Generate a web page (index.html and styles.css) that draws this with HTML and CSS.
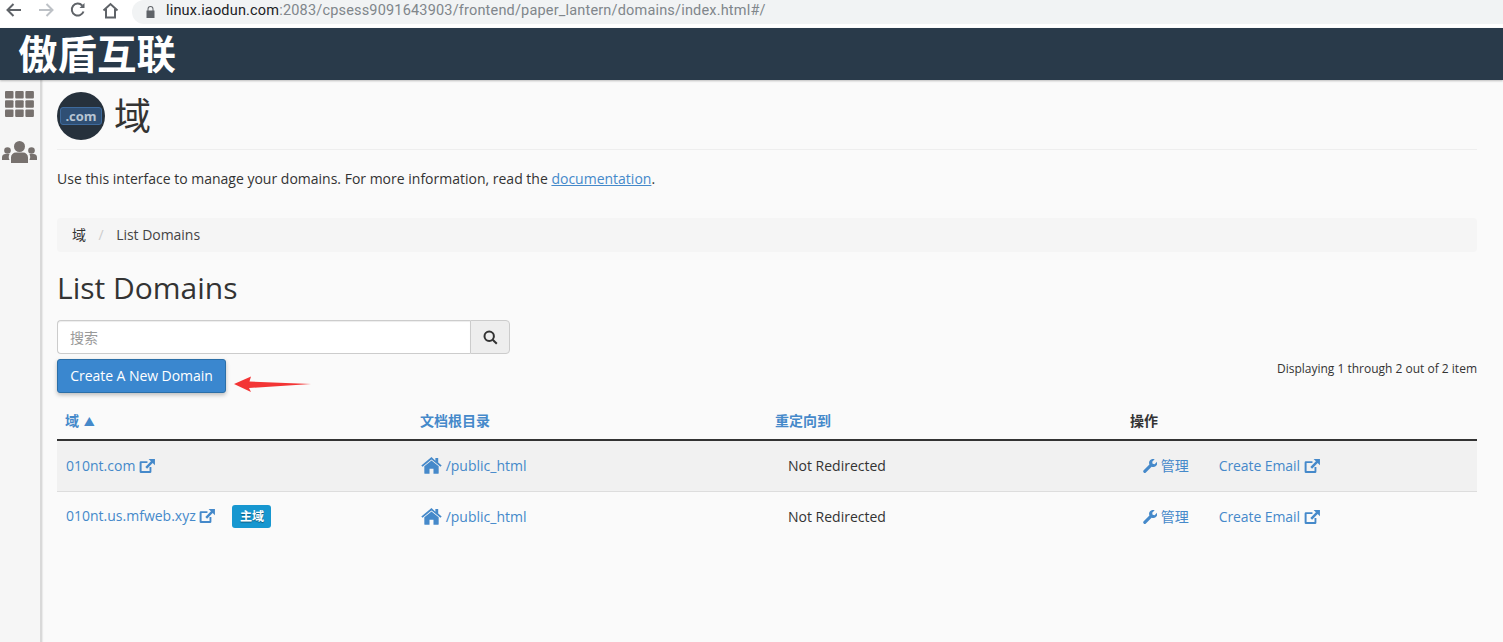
FILE: index.html
```html
<!DOCTYPE html>
<html lang="zh">
<head>
<meta charset="utf-8">
<title>域 - List Domains</title>
<link rel="stylesheet" href="styles.css">
</head>
<body>
<svg class="defs" width="0" height="0" aria-hidden="true">
  <symbol id="ext" viewBox="0 0 17 15">
    <path d="M1.600 2.400h7.400v2H2.700v8.500h8.500V8.600h2v5a1.400 1.400 0 0 1-1.400 1.400H2a1.400 1.400 0 0 1-1.400-1.400V3.800a1.400 1.400 0 0 1 1-1.400z"/>
    <path d="M10.200 0H17v6.800l-2.400-2.400-6 6-1.900-1.900 6-6z"/>
  </symbol>
  <symbol id="home" viewBox="0 0 22 18">
    <path d="M11 3.600 3.400 9.900v7a.9.9 0 0 0 .9.9h4.600v-5.400h4.200v5.400h4.600a.9.900 0 0 0 .9-.9v-7z"/>
    <path d="M11 0 .2 8.900l1.300 1.500L11 2.600l9.500 7.800 1.300-1.500-3.700-3V1h-3v2.900z"/>
  </symbol>
  <symbol id="wrench" viewBox="0 0 14 14">
    <path d="M.7 11.200 6.400 5.500A4 4 0 0 1 11.700.3L9.200 2.800l.4 2 2 .4L14 2.700a4 4 0 0 1-5.400 5L2.900 13.400a1.500 1.500 0 0 1-2.200-2.200z"/>
  </symbol>
</svg>

<header class="browser">
  <nav class="browser-nav">
    <svg class="nav-icon" width="16" height="14" viewBox="0 0 16 14"><path d="M15 7H2M7.500 1 1.500 7l6 6" class="stroke-dark"/></svg>
    <svg class="nav-icon" width="16" height="14" viewBox="0 0 16 14"><path d="M1 7h13M8.500 1l6 6-6 6" class="stroke-light"/></svg>
    <svg class="nav-icon" width="16" height="16" viewBox="0 0 16 16"><path d="M13.500 9.500A6 6 0 1 1 12.200 3.500" class="stroke-dark"/><path d="M14.500 1v5h-5z" class="fill-dark"/></svg>
    <svg class="nav-icon" width="17" height="17" viewBox="0 0 17 17"><path d="M1.500 8.500 8.500 2l7 6.500M4 7v8.500h9V7" class="stroke-dark"/></svg>
  </nav>
  <div class="address">
    <svg class="lock" width="9" height="12" viewBox="0 0 9 12"><path d="M1.500 4.500V3a3 3 0 0 1 6 0v1.500h1V12H.5V4.500zm1 0h4V3a2 2 0 0 0-4 0z"/></svg>
    <span class="url">linux.iaodun.com<span class="url-rest">:2083/cpsess9091643903/frontend/paper_lantern/domains/index.html#/</span></span>
  </div>
</header>

<div class="topbar"><span class="brand">傲盾互联</span></div>

<div class="layout">
  <aside class="sidebar">
    <svg class="side-grid" width="29" height="26" viewBox="0 0 29 26">
      <rect x="0" y="0" width="8.500" height="7.500" rx="1"/><rect x="10.200" y="0" width="8.500" height="7.500" rx="1"/><rect x="20.400" y="0" width="8.500" height="7.500" rx="1"/>
      <rect x="0" y="9.200" width="8.500" height="7.500" rx="1"/><rect x="10.200" y="9.200" width="8.500" height="7.500" rx="1"/><rect x="20.400" y="9.200" width="8.500" height="7.500" rx="1"/>
      <rect x="0" y="18.400" width="8.500" height="7.500" rx="1"/><rect x="10.200" y="18.400" width="8.500" height="7.500" rx="1"/><rect x="20.400" y="18.400" width="8.500" height="7.500" rx="1"/>
    </svg>
    <svg class="side-users" width="35" height="22" viewBox="0 0 35 22">
      <circle cx="17.500" cy="5.500" r="5.500"/><path d="M9 22v-5.500a5 5 0 0 1 5-5h7a5 5 0 0 1 5 5V22z"/>
      <circle cx="5.500" cy="9.500" r="3.300"/><path d="M0 19v-2.500a3.500 3.500 0 0 1 3.500-3.500h4A6.500 6.500 0 0 0 7.500 19z"/>
      <circle cx="29.500" cy="9.500" r="3.300"/><path d="M35 19v-2.500a3.500 3.500 0 0 0-3.500-3.500h-4a6.500 6.500 0 0 1 0 6z"/>
    </svg>
  </aside>

  <main class="content">
    <div class="page-head">
      <span class="app-icon"><span class="app-icon-label">.com</span></span>
      <h1 class="page-title">域</h1>
    </div>
    <p class="intro">Use this interface to manage your domains. For more information, read the <a class="doc-link" href="#">documentation</a>.</p>

    <ol class="breadcrumb">
      <li class="crumb-first">域</li>
      <li class="crumb-sep">/</li>
      <li class="crumb-current">List Domains</li>
    </ol>

    <h2 class="section-title">List Domains</h2>

    <div class="search">
      <input class="search-input" type="text" placeholder="搜索">
      <button class="search-btn" type="button" aria-label="搜索">
        <svg width="15" height="15" viewBox="0 0 15 15"><circle cx="6.200" cy="6.200" r="4.700"/><path d="M9.700 9.700 13.800 13.800"/></svg>
      </button>
    </div>

    <div class="toolbar">
      <button class="primary-btn" type="button">Create A New Domain</button>
      <span class="count">Displaying 1 through 2 out of 2 item</span>
      <svg class="arrow" width="78" height="18" viewBox="0 0 78 18"><path d="M0 9 17 1.500 15.500 6.500 77 9 15 13 17 17z"/></svg>
    </div>

    <table class="domains">
      <thead>
        <tr>
          <th><a href="#">域 <span class="sort">▲</span></a></th>
          <th><a href="#">文档根目录</a></th>
          <th><a href="#">重定向到</a></th>
          <th class="th-plain">操作</th>
        </tr>
      </thead>
      <tbody>
        <tr class="row-alt">
          <td class="cell-domain"><a href="#">010nt.com <svg class="ico ico-ext"><use href="#ext"/></svg></a></td>
          <td class="cell-root"><a href="#"><svg class="ico ico-home"><use href="#home"/></svg> /public_html</a></td>
          <td class="cell-redirect">Not Redirected</td>
          <td class="cell-actions"><a class="act-manage" href="#"><svg class="ico ico-wrench"><use href="#wrench"/></svg> 管理</a><a class="act-email" href="#">Create Email <svg class="ico ico-ext"><use href="#ext"/></svg></a></td>
        </tr>
        <tr>
          <td class="cell-domain"><a href="#">010nt.us.mfweb.xyz <svg class="ico ico-ext"><use href="#ext"/></svg></a><span class="badge">主域</span></td>
          <td class="cell-root"><a href="#"><svg class="ico ico-home"><use href="#home"/></svg> /public_html</a></td>
          <td class="cell-redirect">Not Redirected</td>
          <td class="cell-actions"><a class="act-manage" href="#"><svg class="ico ico-wrench"><use href="#wrench"/></svg> 管理</a><a class="act-email" href="#">Create Email <svg class="ico ico-ext"><use href="#ext"/></svg></a></td>
        </tr>
      </tbody>
    </table>
  </main>
</div>
</body>
</html>
```
FILE: styles.css
```css
* { box-sizing: border-box; }
html, body { margin: 0; height: 100%; overflow: hidden; }
body {
  font-family: "Open Sans", "Noto Sans CJK SC", sans-serif;
  font-size: 14px;
  line-height: 20px;
  color: #333;
  background: #fafafa;
  display: flex;
  flex-direction: column;
}
a { color: #4589ca; text-decoration: none; }
.defs { position: absolute; }

.browser {
  height: 28px;
  flex: none;
  display: flex;
  background: #fff;
}
.browser-nav {
  width: 132px;
  flex: none;
  display: flex;
  align-items: center;
  gap: 16px;
  padding: 0 0 8px 6px;
}
.nav-icon { flex: none; }
.stroke-dark, .stroke-light { fill: none; stroke-width: 2; }
.stroke-dark { stroke: #5f6368; }
.stroke-light { stroke: #bdc1c6; }
.fill-dark { fill: #5f6368; }
.address {
  flex: 1;
  height: 24px;
  background: #f1f3f4;
  border-radius: 12px 0 0 12px;
  display: flex;
  align-items: center;
  gap: 11px;
  padding-left: 14px;
}
.lock { fill: #5f6368; flex: none; }
.url {
  font-family: "Roboto", sans-serif;
  font-size: 14.5px;
  line-height: 18px;
  padding-bottom: 2px;
  color: #202124;
  letter-spacing: .18px;
  white-space: nowrap;
}
.url-rest { color: #80868b; }

.topbar {
  height: 52px;
  flex: none;
  background: #293a4a;
  padding: 0 0 4px 18px;
  display: flex;
  align-items: center;
  box-shadow: 0 1px 2px rgba(0,0,0,.25);
  position: relative;
}
.brand {
  font-family: "Noto Sans CJK SC", sans-serif;
  font-size: 39.5px;
  line-height: 48px;
  font-weight: 700;
  color: #fff;
}

.layout { flex: 1; display: flex; min-height: 0; }
.sidebar {
  width: 42px;
  flex: none;
  background: #f6f6f6;
  border-right: 2px solid #d9d9d9;
  box-shadow: 1px 0 1px rgba(0,0,0,.06);
  display: flex;
  flex-direction: column;
  align-items: flex-start;
  padding: 11px 0 0 5px;
}
.side-grid, .side-users { fill: #77716e; }
.side-users { margin: 24px 0 0 -3px; }

.content { flex: 1; min-width: 0; padding: 12px 26px 0 15px; }

.page-head {
  height: 58px;
  display: flex;
  align-items: flex-start;
  gap: 9px;
  border-bottom: 1px solid #eee;
}
.app-icon {
  width: 48px;
  height: 48px;
  border-radius: 50%;
  background: #26313c;
  display: flex;
  align-items: center;
  justify-content: center;
}
.app-icon-label {
  font-size: 13px;
  line-height: 16px;
  font-weight: 700;
  color: #b7c5d3;
  background: #2f4f74;
  border: 1px solid #3e6a9c;
  border-radius: 3px;
  padding: 0 4px;
}
.page-title {
  margin: 0;
  font-family: "Noto Sans CJK SC", sans-serif;
  font-size: 37px;
  line-height: 44px;
  font-weight: 400;
}
.intro { margin: 19px 0 0; }
.doc-link { text-decoration: underline; }

.breadcrumb {
  list-style: none;
  margin: 29px 0 0;
  padding: 7px 15px;
  height: 34px;
  display: flex;
  background: #f5f5f5;
  border-radius: 4px;
}
.crumb-sep { color: #ccc; padding: 0 12.5px; }
.crumb-first { color: #333; }
.crumb-current { color: #444; letter-spacing: -.03px; }

.section-title {
  margin: 19px 0 0;
  font-size: 30px;
  line-height: 33px;
  font-weight: 400;
}

.search {
  display: flex;
  width: 453px;
  height: 34px;
  margin-top: 16px;
}
.search-input {
  flex: 1;
  min-width: 0;
  height: 34px;
  padding: 6px 12px;
  border: 1px solid #ccc;
  border-right: 0;
  border-radius: 4px 0 0 4px;
  background: #fff;
  font: 14px "Open Sans", "Noto Sans CJK SC", sans-serif;
  box-shadow: inset 0 1px 1px rgba(0,0,0,.075);
}
.search-input::placeholder { color: #999; }
.search-btn {
  width: 40px;
  height: 34px;
  padding: 0;
  border: 1px solid #ccc;
  border-radius: 0 4px 4px 0;
  background: #eee;
  display: flex;
  align-items: center;
  justify-content: center;
}
.search-btn svg { fill: none; stroke: #333; stroke-width: 2; }

.toolbar {
  position: relative;
  display: flex;
  justify-content: space-between;
  align-items: flex-start;
  margin-top: 5px;
  height: 34px;
}
.primary-btn {
  height: 34px;
  width: 169px;
  padding: 0 0 2px;
  border: 1px solid #2b6fa8;
  border-radius: 3px;
  background: #3a87cf;
  color: #fff;
  font: 14px "Open Sans", sans-serif;
  letter-spacing: -.05px;
  box-shadow: 0 2px 4px rgba(0,0,0,.25);
}
.count { font-size: 12px; color: #333; }
.arrow {
  position: absolute;
  left: 177px;
  top: 16px;
  fill: #f33535;
}

.domains {
  width: 100%;
  table-layout: fixed;
  border-collapse: collapse;
  margin-top: 10px;
}
.domains th {
  height: 37px;
  padding: 0 8px;
  text-align: left;
  font-size: 14px;
  font-weight: 700;
  border-bottom: 2px solid #333;
}
.sort { font-size: 11px; margin-left: 1px; }
.th-plain { color: #333; }
.domains td {
  height: 51px;
  padding: 0 9px;
  border-bottom: 1px solid #ddd;
}
.domains tbody tr:last-child td { border-bottom: 0; }
.row-alt td { background: #f1f1f1; }
.ico { fill: #4589ca; vertical-align: -2px; }
.ico-ext { width: 16px; height: 14px; }
.ico-home { width: 21px; height: 17px; vertical-align: -3px; }
.ico-wrench { width: 14px; height: 14px; }
.badge {
  display: inline-block;
  margin-left: 17px;
  padding: 0 7.5px;
  height: 23px;
  line-height: 23px;
  background: #1797d0;
  color: #fff;
  border-radius: 3px;
  font-size: 12px;
  font-weight: 700;
  text-shadow: 0 1px 1px rgba(0,0,0,.4);
  vertical-align: middle;
}
.cell-redirect { padding-left: 21px !important; }
.cell-actions { padding-left: 21px !important; }
.act-manage { margin-right: 30px; }
.act-email { letter-spacing: -.08px; }
```
